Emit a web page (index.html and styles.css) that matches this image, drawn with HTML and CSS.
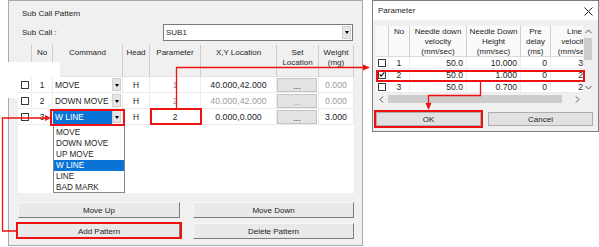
FILE: index.html
```html
<!DOCTYPE html>
<html lang="en">
<head>
<meta charset="UTF-8">
<meta name="viewport" content="width=device-width, initial-scale=1.0">
<title>Sub Call Pattern</title>
<link rel="stylesheet" href="styles.css">
</head>
<body>
<div id="screen">

<div id="subWindow">
    <div class="sw-title">Sub Call Pattern</div>
    <div class="sw-row">
        <span class="sw-label">Sub Call :</span>
        <div class="combo"><span>SUB1</span><span class="drop-btn"></span></div>
    </div>

    <div class="pattern-grid">
        <div class="hd"></div>
        <div class="hd">No</div>
        <div class="hd">Command</div>
        <div class="hd">Head</div>
        <div class="hd">Parameter</div>
        <div class="hd">X,Y Location</div>
        <div class="hd">Set<br>Location</div>
        <div class="hd">Weight<br>(mg)</div>

        <div class="cell"><span class="chk"></span></div>
        <div class="cell">1</div>
        <div class="cell cmd"><span class="cmd-text">MOVE</span><span class="drop-btn"></span></div>
        <div class="cell">H</div>
        <div class="cell dim">1</div>
        <div class="cell num">40.000,42.000</div>
        <div class="cell"><span class="dots">...</span></div>
        <div class="cell num dim">0.000</div>

        <div class="cell"><span class="chk"></span></div>
        <div class="cell">2</div>
        <div class="cell cmd"><span class="cmd-text">DOWN MOVE</span><span class="drop-btn"></span></div>
        <div class="cell">H</div>
        <div class="cell dim">2</div>
        <div class="cell num dim">40.000,42.000</div>
        <div class="cell"><span class="dots dim">...</span></div>
        <div class="cell num dim">0.000</div>

        <div class="cell"><span class="chk"></span></div>
        <div class="cell">3</div>
        <div class="cell cmd"><span class="cmd-text selected">W LINE</span><span class="drop-btn"></span></div>
        <div class="cell">H</div>
        <div class="cell">2</div>
        <div class="cell num">0.000,0.000</div>
        <div class="cell"><span class="dots">...</span></div>
        <div class="cell num">3.000</div>
    </div>

    <div class="btn-grid">
        <div class="btn">Move Up</div>
        <div class="btn">Move Down</div>
        <div class="btn">Add Pattern</div>
        <div class="btn">Delete Pattern</div>
    </div>
</div>

<div id="paramDialog">
    <div class="pd-title">
        <span>Parameter</span>
        <svg class="pd-close" width="9" height="9" viewBox="0 0 9 9"><path d="M0.5 0.5 L8.5 8.5 M8.5 0.5 L0.5 8.5" stroke="#222" stroke-width="1"/></svg>
    </div>
    <div class="pd-body">
        <div class="pd-grid">
            <div class="pd-table">
                <div class="ph"></div>
                <div class="ph">No</div>
                <div class="ph">Needle down<br>velocity<br>(mm/sec)</div>
                <div class="ph">Needle Down<br>Height<br>(mm/sec)</div>
                <div class="ph">Pre<br>delay<br>(ms)</div>
                <div class="ph">Line<br>velocity<br>(mm/sec)</div>

                <div class="pc"><span class="chk"></span></div>
                <div class="pc mid">1</div>
                <div class="pc">50.0</div>
                <div class="pc">10.000</div>
                <div class="pc">0</div>
                <div class="pc">30.0</div>

                <div class="pc"><span class="chk"><svg width="7" height="7" viewBox="0 0 7 7"><path d="M0.8 3.4 L2.6 5.4 L6.2 1" fill="none" stroke="#111" stroke-width="1.3"/></svg></span></div>
                <div class="pc mid">2</div>
                <div class="pc">50.0</div>
                <div class="pc">1.000</div>
                <div class="pc">0</div>
                <div class="pc">20.0</div>

                <div class="pc"><span class="chk"></span></div>
                <div class="pc mid">3</div>
                <div class="pc">50.0</div>
                <div class="pc">0.700</div>
                <div class="pc">0</div>
                <div class="pc">20.0</div>
            </div>
            <div class="vscroll">
                <div class="sb-arrow"><svg width="7" height="5" viewBox="0 0 7 5"><path d="M0.5 4 L3.5 1 L6.5 4" fill="none" stroke="#555" stroke-width="1"/></svg></div>
                <div class="v-thumb"></div>
                <div class="sb-fill"></div>
                <div class="sb-arrow"><svg width="7" height="5" viewBox="0 0 7 5"><path d="M0.5 1 L3.5 4 L6.5 1" fill="none" stroke="#555" stroke-width="1"/></svg></div>
            </div>
            <div class="hscroll">
                <div class="sb-arrow"><svg width="5" height="7" viewBox="0 0 5 7"><path d="M4 0.5 L1 3.5 L4 6.5" fill="none" stroke="#555" stroke-width="1"/></svg></div>
                <div class="h-thumb"></div>
                <div class="sb-fill"></div>
                <div class="sb-arrow"><svg width="5" height="7" viewBox="0 0 5 7"><path d="M1 0.5 L4 3.5 L1 6.5" fill="none" stroke="#555" stroke-width="1"/></svg></div>
            </div>
            <div class="corner"></div>
        </div>
        <div class="pd-buttons">
            <div class="btn flat">OK</div>
            <div class="btn flat">Cancel</div>
        </div>
    </div>
</div>

<!-- open combo list of row 3 -->
<div class="drop-list">
    <div>MOVE</div>
    <div>DOWN MOVE</div>
    <div>UP MOVE</div>
    <div class="on">W LINE</div>
    <div>LINE</div>
    <div>BAD MARK</div>
</div>

<div class="patch patch-a"></div>
<div class="patch patch-b"></div>

<!-- red callouts -->
<svg class="marks" width="599" height="247" viewBox="0 0 599 247">
    <g fill="none" stroke="#ee1111">
        <rect x="51" y="110" width="73" height="15" stroke-width="2"/>
        <rect x="151" y="109" width="50" height="15" stroke-width="2"/>
        <rect x="17" y="223" width="164" height="15" stroke-width="2"/>
        <rect x="377" y="71" width="207" height="10" stroke-width="2"/>
        <rect x="375" y="111" width="107" height="16" stroke-width="2"/>
        <polyline points="17,231 2.5,231 2.5,118 46,118" stroke-width="1.3"/>
        <polyline points="176.5,108 176.5,67.5 364,67.5" stroke-width="1.3"/>
        <polyline points="480.5,82 480.5,95.5 428.5,95.5 428.5,104" stroke-width="1.3"/>
    </g>
    <g fill="#ee1111">
        <polygon points="45,115 51,118 45,121"/>
        <polygon points="363,64.5 370,67.5 363,70.5"/>
        <polygon points="425.5,103 428.5,110 431.5,103"/>
    </g>
</svg>

</div>
</body>
</html>
```

FILE: styles.css
```css
* {
    box-sizing: border-box;
}
body {
    margin: 0;
    background-color: #fff;
    font-family: "Liberation Sans", Arial, sans-serif;
    font-size: 8px;
    color: #1e1e1e;
}
#screen {
    position: relative;
    width: 599px;
    height: 247px;
    display: flex;
    align-items: flex-start;
    overflow: hidden;
}

/* left window */
#subWindow {
    margin-left: 8px;
    width: 355px;
    padding: 4px 8px 6px 9px;
    border: 1px solid #a9a9a9;
    background-color: #f0f0f0;
}
.sw-title {
    height: 18px;
    line-height: 18px;
    padding-left: 4px;
}
.sw-row {
    display: flex;
    align-items: center;
    height: 18px;
}
.sw-label {
    padding-left: 4px;
}
.combo {
    margin-left: auto;
    margin-right: 1px;
    width: 190px;
    height: 17px;
    border: 1px solid #7a7a7a;
    background-color: #fff;
    display: flex;
    align-items: center;
    justify-content: space-between;
    padding: 0 1px 0 2px;
}
.drop-btn {
    position: relative;
    width: 9px;
    height: 13px;
    background-color: #e6e6e6;
    border: 1px solid #cfcfcf;
}
.drop-btn::after {
    content: "";
    position: absolute;
    left: 1.5px;
    top: 4.5px;
    border-left: 2.5px solid transparent;
    border-right: 2.5px solid transparent;
    border-top: 3px solid #000;
}

.pattern-grid {
    margin-top: 4px;
    height: 148px;
    background-color: #fff;
    display: grid;
    grid-template-columns: 14px 21px 70px 27px 51px 76px 42px 35px;
    grid-template-rows: 32px repeat(3, 16px);
    align-content: start;
}
.hd {
    background-color: #f0f0f0;
    border-right: 1px solid #cdcdcd;
    border-bottom: 1px solid #e2e2e2;
    padding-top: 3px;
    line-height: 10px;
    text-align: center;
}
.cell {
    display: flex;
    align-items: center;
    justify-content: center;
    border-right: 1px solid #ececec;
    border-bottom: 1px solid #ececec;
    font-size: 8.4px;
}
.cell.num {
    font-size: 8.8px;
}
.dim {
    color: #9c9c9c;
}
.chk {
    display: inline-flex;
    align-items: center;
    justify-content: center;
    width: 8px;
    height: 8px;
    border: 1px solid #3c3c3c;
    background-color: #fff;
}
.cmd {
    justify-content: space-between;
    padding-right: 1px;
}
.cmd-text {
    flex: 1;
    align-self: stretch;
    display: flex;
    align-items: center;
    padding-left: 2px;
}
.cmd-text.selected {
    background-color: #0a74d6;
    color: #fff;
}
.dots {
    width: 41px;
    height: 14px;
    margin-right: 1px;
    background-color: #e3e3e3;
    border: 1px solid #c4c4c4;
    text-align: center;
    line-height: 14px;
}

.btn-grid {
    margin-top: 9px;
    display: grid;
    grid-template-columns: 162px 161px;
    grid-auto-rows: 16px;
    column-gap: 13px;
    row-gap: 5px;
}
.btn {
    display: flex;
    align-items: center;
    justify-content: center;
    background-color: #e9e9e9;
    border: 1px solid;
    border-color: #f6f6f6 #7c7c7c #7c7c7c #f6f6f6;
}
.btn.flat {
    background-color: #e1e1e1;
    border-color: #adadad;
}

/* parameter dialog */
#paramDialog {
    margin-left: 9px;
    width: 227px;
    border: 1px solid #7e7e7e;
    background-color: #f0f0f0;
}
.pd-title {
    height: 19px;
    background-color: #fff;
    display: flex;
    align-items: center;
    justify-content: space-between;
    padding: 0 5px 0 5px;
}
.pd-close {
    margin-top: 1px;
}
.pd-body {
    padding: 6px 0 5px 3px;
}
.pd-grid {
    width: 217px;
    display: grid;
    grid-template-columns: 207px 10px;
    grid-template-rows: 67px 12px;
}
.pd-table {
    overflow: hidden;
    background-color: #fff;
    display: grid;
    grid-template-columns: 13px 21px 57px 54px 30px 48px;
    grid-template-rows: 31px repeat(3, 12px);
}
.ph {
    background-color: #fafafa;
    border-right: 1px solid #cfcfcf;
    border-bottom: 1px solid #dadada;
    padding-top: 1px;
    line-height: 10px;
    text-align: center;
    white-space: nowrap;
}
.pc {
    display: flex;
    align-items: center;
    justify-content: flex-end;
    padding-right: 3px;
    border-right: 1px solid #ececec;
    border-bottom: 1px solid #ececec;
    font-size: 8.6px;
}
.pc:nth-child(6n+1) {
    justify-content: center;
    padding-right: 0;
}
.pc.mid {
    justify-content: center;
    padding-right: 0;
}
.vscroll {
    background-color: #f0f0f0;
    display: flex;
    flex-direction: column;
    align-items: center;
}
.hscroll {
    background-color: #f0f0f0;
    display: flex;
    align-items: center;
}
.sb-arrow {
    width: 11px;
    height: 11px;
    display: flex;
    align-items: center;
    justify-content: center;
}
.sb-fill {
    flex: 1;
}
.v-thumb {
    width: 8px;
    height: 22px;
    margin-top: 1px;
    background-color: #cdcdcd;
}
.h-thumb {
    width: 174px;
    height: 8px;
    margin-left: 1px;
    background-color: #cdcdcd;
}
.corner {
    background-color: #f0f0f0;
}
.pd-buttons {
    margin-top: 7px;
    width: 217px;
    display: grid;
    grid-template-columns: 105px 105px;
    column-gap: 7px;
    height: 14px;
}

/* overlays */
.drop-list {
    position: absolute;
    left: 53px;
    top: 125px;
    width: 72px;
    height: 68px;
    padding-top: 1px;
    background-color: #fff;
    border: 1px solid #828790;
    z-index: 3;
}
.drop-list div {
    height: 11px;
    line-height: 11px;
    padding-left: 2px;
    font-size: 8.2px;
}
.drop-list .on {
    background-color: #0a74d6;
    color: #fff;
}
.patch {
    position: absolute;
    left: 0;
    top: 62px;
    background-color: #fff;
    z-index: 2;
}
.patch-a {
    width: 60px;
    height: 15px;
}
.patch-b {
    width: 18px;
    height: 36px;
}
.marks {
    position: absolute;
    left: 0;
    top: 0;
    z-index: 5;
    pointer-events: none;
}
```
